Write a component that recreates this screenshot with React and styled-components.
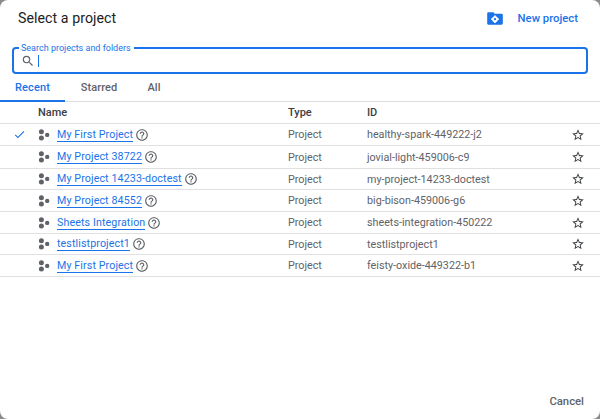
import React from 'react';
import styled, { createGlobalStyle } from 'styled-components';

const GlobalStyle = createGlobalStyle`
  html, body {
    margin: 0;
    height: 100%;
    background: #8a8a8a;
  }
  body {
    font-family: Roboto, "Liberation Sans", sans-serif;
  }
`;

const Dialog = styled.div`
  width: 600px;
  height: 419px;
  background: #fff;
  border-radius: 8px;
  overflow: hidden;
  display: flex;
  flex-direction: column;
  color: #3c4043;
`;

const Header = styled.div`
  display: flex;
  align-items: center;
  justify-content: space-between;
  height: 36px;
  padding: 0 22px 0 18px;
`;

const Title = styled.h1`
  margin: 0;
  font-size: 14.2px;
  font-weight: 400;
  letter-spacing: 0.05px;
  color: #202124;
`;

const NewProject = styled.a`
  display: flex;
  align-items: center;
  gap: 15px;
  color: #1a73e8;
  font-size: 11.3px;
  font-weight: 500;
`;

const SearchField = styled.div`
  position: relative;
  margin: 11px 12px 0 12px;
  padding-left: 7px;
  height: 27px;
  box-sizing: border-box;
  border: 2px solid #1a73e8;
  border-radius: 4px;
  display: flex;
  align-items: center;
`;

const SearchLabel = styled.label`
  position: absolute;
  top: -6px;
  left: 5px;
  padding: 0 3px 0 2px;
  font-size: 9px;
  line-height: 10px;
  color: #1a73e8;
  background: #fff;
`;

const SearchGlyph = styled.svg`
  width: 14px;
  height: 14px;
  flex: none;
`;

const Caret = styled.span`
  display: block;
  width: 1px;
  height: 12px;
  margin-left: 3px;
  background: #1a73e8;
`;

const Tabs = styled.div`
  display: flex;
  height: 28px;
  border-bottom: 1px solid #dadce0;
  box-sizing: border-box;
`;

const Tab = styled.div`
  width: ${p => p.$width}px;
  box-sizing: border-box;
  padding-top: 7px;
  text-align: center;
  font-size: 11px;
  font-weight: 500;
  letter-spacing: 0.1px;
  color: ${p => (p.$active ? '#1a73e8' : '#5f6368')};
  border-bottom: ${p => (p.$active ? '2px solid #1a73e8' : 'none')};
  height: 28px;
`;

const Row = styled.div`
  display: grid;
  grid-template-columns: 38px 250px 79px 1fr 32px;
  align-items: center;
  height: ${p => p.$height}px;
  box-sizing: border-box;
  border-bottom: 1px solid #e0e0e0;
  font-size: 10.75px;
  color: #5f6368;
`;

const HeadCell = styled.div`
  font-weight: 500;
  font-size: 11px;
  color: #3c4043;
`;

const CheckCell = styled.div`
  display: flex;
  justify-content: center;
`;

const NameCell = styled.div`
  display: flex;
  align-items: center;
`;

const ProjectLink = styled.a`
  margin-left: 7px;
  color: #1a73e8;
  font-size: 10.7px;
  letter-spacing: 0.1px;
  line-height: 13px;
  border-bottom: 1px solid #1a73e8;
  white-space: nowrap;
`;

const HelpIcon = styled.svg`
  width: 14px;
  height: 14px;
  margin-left: 2px;
  flex: none;
`;

const StarCell = styled.div`
  display: flex;
  padding-left: 3px;
`;

const Footer = styled.div`
  margin-top: auto;
  display: flex;
  justify-content: flex-end;
  padding: 0 16px 11px 0;
  font-size: 11.3px;
  font-weight: 500;
  color: #5f6368;
`;

const projects = [
  { name: 'My First Project', id: 'healthy-spark-449222-j2', selected: true, height: 22 },
  { name: 'My Project 38722', id: 'jovial-light-459006-c9', height: 23 },
  { name: 'My Project 14233-doctest', id: 'my-project-14233-doctest', height: 21 },
  { name: 'My Project 84552', id: 'big-bison-459006-g6', height: 22 },
  { name: 'Sheets Integration', id: 'sheets-integration-450222', height: 22 },
  { name: 'testlistproject1', id: 'testlistproject1', height: 21 },
  { name: 'My First Project', id: 'feisty-oxide-449322-b1', height: 22 },
];

function FolderGear() {
  return (
    <svg width="16" height="13" viewBox="0 0 16 13">
      <path d="M1.3 0.3h5l1.5 1.5h6.9a1.1 1.1 0 0 1 1.1 1.1v8.7a1.1 1.1 0 0 1-1.1 1.1H1.3a1.1 1.1 0 0 1-1.1-1.1V1.4a1.1 1.1 0 0 1 1.1-1.1z" fill="#1a73e8" />
      <circle cx="8" cy="7.2" r="2.9" fill="#fff" />
      <path d="M7.1 3.4h1.8v1.4H7.1zM7.1 9.6h1.8v1.4H7.1zM4.2 6.3h1.4v1.8H4.2zM10.4 6.3h1.4v1.8h-1.4z" fill="#fff" />
      <circle cx="8" cy="7.2" r="1.1" fill="#1a73e8" />
    </svg>
  );
}

function SearchIcon() {
  return (
    <SearchGlyph viewBox="0 0 24 24" fill="#5f6368">
      <path d="M15.5 14h-.79l-.28-.27A6.47 6.47 0 0 0 16 9.5 6.5 6.5 0 1 0 9.5 16c1.61 0 3.09-.59 4.23-1.57l.27.28v.79l5 4.99L20.49 19l-4.99-5zm-6 0C7.01 14 5 11.99 5 9.5S7.01 5 9.5 5 14 7.01 14 9.5 11.99 14 9.5 14z" />
    </SearchGlyph>
  );
}

function Check() {
  return (
    <svg width="13" height="13" viewBox="0 0 24 24" fill="#1a73e8">
      <path d="M9 16.17L4.83 12l-1.42 1.41L9 19 21 7l-1.41-1.41z" />
    </svg>
  );
}

function ProjectDots() {
  return (
    <svg width="12" height="12" viewBox="0 0 12 12" fill="#5f6368">
      <circle cx="3.4" cy="2.8" r="2.5" />
      <circle cx="3.4" cy="9" r="2.5" />
      <circle cx="9.2" cy="5.9" r="2.2" />
    </svg>
  );
}

function Help() {
  return (
    <HelpIcon viewBox="0 0 24 24" fill="#5f6368">
      <path d="M11 18h2v-2h-2v2zm1-16C6.48 2 2 6.48 2 12s4.48 10 10 10 10-4.48 10-10S17.52 2 12 2zm0 18c-4.41 0-8-3.59-8-8s3.59-8 8-8 8 3.59 8 8-3.59 8-8 8zm0-14c-2.21 0-4 1.79-4 4h2c0-1.1.9-2 2-2s2 .9 2 2c0 2-3 1.75-3 5h2c0-2.25 3-2.5 3-5 0-2.21-1.79-4-4-4z" />
    </HelpIcon>
  );
}

function Star() {
  return (
    <svg width="14" height="14" viewBox="0 0 24 24" fill="#3c4043">
      <path d="M22 9.24l-7.19-.62L12 2 9.19 8.63 2 9.24l5.46 4.73L5.82 21 12 17.27 18.18 21l-1.63-7.03L22 9.24zM12 15.4l-3.76 2.27 1-4.28-3.32-2.88 4.38-.38L12 6.1l1.71 4.04 4.38.38-3.32 2.88 1 4.28L12 15.4z" />
    </svg>
  );
}

export default function App() {
  return (
    <>
      <GlobalStyle />
      <Dialog>
        <Header>
          <Title>Select a project</Title>
          <NewProject>
            <FolderGear />
            New project
          </NewProject>
        </Header>
        <SearchField>
          <SearchLabel>Search projects and folders</SearchLabel>
          <SearchIcon />
          <Caret />
        </SearchField>
        <Tabs>
          <Tab $active $width={65}>Recent</Tab>
          <Tab $width={68}>Starred</Tab>
          <Tab $width={42}>All</Tab>
        </Tabs>
        <Row $height={22}>
          <div />
          <HeadCell>Name</HeadCell>
          <HeadCell>Type</HeadCell>
          <HeadCell>ID</HeadCell>
          <div />
        </Row>
        {projects.map(p => (
          <Row key={p.id} $height={p.height}>
            <CheckCell>{p.selected && <Check />}</CheckCell>
            <NameCell>
              <ProjectDots />
              <ProjectLink>{p.name}</ProjectLink>
              <Help />
            </NameCell>
            <div>Project</div>
            <div>{p.id}</div>
            <StarCell><Star /></StarCell>
          </Row>
        ))}
        <Footer>Cancel</Footer>
      </Dialog>
    </>
  );
}
